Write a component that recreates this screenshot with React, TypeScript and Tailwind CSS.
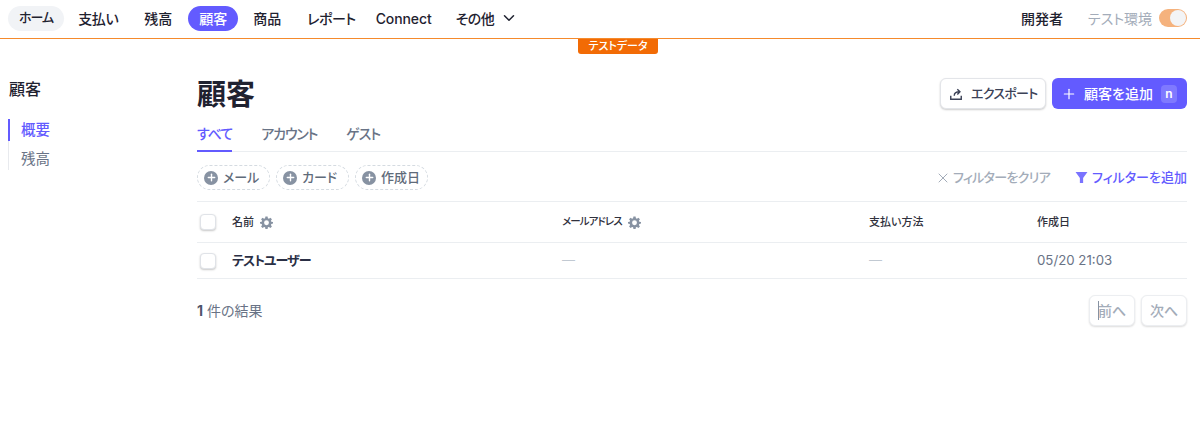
import React from "react";
import { ChevronDown, Plus, X } from "lucide-react";

const font = "font-['Inter','Noto_Sans_CJK_JP',sans-serif] [font-feature-settings:'palt']";

// the kana in the original font are narrow, hence the tracking on those labels
const navItems = [
  { label: "ホーム", cls: "rounded-full bg-[#f1f3f6] px-[11px] text-[13px] tracking-[-1px]" },
  { label: "支払い", cls: "px-[12px] tracking-[-0.4px]" },
  { label: "残高", cls: "px-[12px]" },
  { label: "顧客", cls: "ml-[2px] mr-[1px] w-[50px] justify-center rounded-full bg-[#635bff] text-white" },
  { label: "商品", cls: "px-[12px]" },
  { label: "レポート", cls: "-mr-[6px] px-[12px] tracking-[-0.5px]" },
  { label: "Connect", cls: "px-[12px] tracking-[-0.1px]" },
];

const Gear = () => (
  <svg width="13" height="13" viewBox="0 0 24 24" fill="#8792a2">
    <path
      fillRule="evenodd"
      d="M10 1h4l.6 3.200 1.900.8 2.700-1.900 2.800 2.800-1.900 2.700.8 1.900L24 11v3l-3.100.6-.8 1.900 1.900 2.700-2.800 2.800-2.700-1.900-1.900.8L14 24h-4l-.6-3.100-1.900-.8-2.700 1.900L2 19.200l1.900-2.700-.8-1.900L0 14v-3l3.100-.5.8-1.900L2 5.900l2.800-2.800 2.700 1.900 1.900-.8L10 1zm2 7a4.500 4.500 0 1 0 0 9 4.500 4.500 0 0 0 0-9z"
    />
  </svg>
);

const FilterChip = ({ label }: { label: string }) => (
  <button className="flex h-[25px] w-[73px] items-center gap-[5px] rounded-full border border-dashed border-[#d5dbe1] pl-[6px] text-[13px] font-medium text-[#5f6b7a]">
    <span className="flex h-[14px] w-[14px] shrink-0 items-center justify-center rounded-full bg-[#8792a2]">
      <Plus size={11} strokeWidth={3} className="text-white" />
    </span>
    {label}
  </button>
);

const Checkbox = () => (
  <span className="block h-4 w-4 rounded-[4px] border border-[#e0e3e8] bg-white shadow-[0_1px_2px_rgba(0,0,0,0.22)]" />
);

const App: React.FC = () => {
  return (
    <div className={`${font} h-[432px] w-[1200px] overflow-hidden bg-white text-[#1f2230]`}>
      {/* Top nav */}
      <div className="flex h-[39px] items-center justify-between border-b border-[#f58a2c] pb-[2px] pl-[8px] pr-[13px]">
        <div className="flex items-center gap-[2px] text-[14px] font-medium">
          {navItems.map((item) => (
            <a key={item.label} className={`flex h-[25px] items-center ${item.cls}`}>
              {item.label}
            </a>
          ))}
          <a className="flex h-[25px] items-center gap-[6px] px-[10px] tracking-[-0.5px]">
            その他
            <ChevronDown size={18} strokeWidth={2} />
          </a>
        </div>
        <div className="flex items-center">
          <span className="mr-[25px] text-[14px] font-medium">開発者</span>
          <span className="mr-[7px] text-[14px] text-[#a3acb9]">テスト環境</span>
          <span className="flex h-[18px] w-[28px] items-center justify-end rounded-full bg-[#f5b27d] pr-[1px]">
            <span className="h-[16px] w-[16px] rounded-full bg-[#f3f4f6]" />
          </span>
        </div>
      </div>

      {/* Test data badge */}
      <div className="flex h-[15px] justify-center pl-[36px]">
        <span className="flex h-[15px] w-[80px] items-center justify-center rounded-b-[3px] bg-[#f26b05] text-[11px] font-medium leading-none text-white">
          テストデータ
        </span>
      </div>

      <div className="flex pl-[8px] pr-[13px] pt-[24px]">
        {/* Sidebar */}
        <div className="w-[189px] shrink-0">
          <div className="mb-[18px] pl-px text-[16px] font-medium leading-[22px]">顧客</div>
          <div className="mt-[19px] border-l border-[#e8eaee] text-[14.5px] leading-[22px]">
            <div className="-ml-px border-l-2 border-[#635bff] pl-[11px] font-medium text-[#635bff]">概要</div>
            <div className="pl-[12px] pt-[7px] text-[#697386]">残高</div>
          </div>
        </div>

        {/* Main */}
        <div className="min-w-0 flex-1">
          <div className="flex items-start justify-between">
            <h1 className="-mt-px mb-px text-[29px] font-semibold leading-[36px]">顧客</h1>
            <div className="flex items-center gap-[6px]">
              <button className="flex h-[31px] w-[106px] items-center gap-[8px] rounded-[6px] border border-[#e3e5e9] bg-white pl-[8px] text-[13px] font-medium tracking-[-0.7px] text-[#3c4257] shadow-[0_1px_2px_rgba(0,0,0,0.2)]">
                <svg width="14" height="14" viewBox="0 0 16 16" fill="none" stroke="#3c4257" strokeWidth="1.6">
                  <path d="M2 10v4h12v-4" />
                  <path d="M6 10c0-3 2-4.500 6-4.500M9.500 2.500l3 3-3 3" />
                </svg>
                エクスポート
              </button>
              <button className="flex h-[31px] w-[135px] items-center rounded-[6px] bg-[#635bff] pl-[9px] text-[14px] font-medium text-white">
                <Plus size={16} strokeWidth={1.8} className="mr-[7px]" />
                顧客を追加
                <span className="ml-[8px] flex h-[18px] w-[16px] items-center justify-center rounded-[4px] bg-[#7f79ff] text-[12px] font-semibold">n</span>
              </button>
            </div>
          </div>

          {/* Tabs */}
          <div className="mt-[9px] flex h-[29px] gap-[29px] border-b border-[#ebeef1] text-[14px] font-medium text-[#697386]">
            <span className="-mb-px h-[29px] border-b-2 border-[#635bff] leading-[22px] tracking-[-1px] text-[#635bff]">すべて</span>
            <span className="leading-[22px] tracking-[-1.2px]">アカウント</span>
            <span className="leading-[22px] tracking-[-1px]">ゲスト</span>
          </div>

          {/* Filters */}
          <div className="flex h-[50px] items-center justify-between border-b border-[#ebeef1] pt-[2px]">
            <div className="flex items-center gap-[6px]">
              <FilterChip label="メール" />
              <FilterChip label="カード" />
              <FilterChip label="作成日" />
            </div>
            <div className="flex items-center text-[13px] font-medium">
              <span className="flex items-center gap-[2px] tracking-[-0.7px] text-[#a3acb9]">
                <X size={16} strokeWidth={1.5} />
                フィルターをクリア
              </span>
              <span className="ml-[25px] flex items-center gap-[4px] text-[#635bff]">
                <svg width="13" height="13" viewBox="0 0 12 12" fill="#7a73ff">
                  <path d="M.5 1h11L7.500 6.500V11h-3V6.500z" />
                </svg>
                フィルターを追加
              </span>
            </div>
          </div>

          {/* Table */}
          <div className="grid h-[41px] grid-cols-[35px_330px_307px_168px_1fr] items-center border-b border-[#ebeef1] text-[11px] font-medium text-[#30313d]">
            <div className="pl-[3px]"><Checkbox /></div>
            <div className="flex items-center gap-[6px]">名前 <Gear /></div>
            <div className="flex items-center gap-[6px]"><span className="text-[10.5px] tracking-[-0.9px]">メールアドレス</span> <Gear /></div>
            <div className="pt-[1px]">支払い方法</div>
            <div className="pt-[1px]">作成日</div>
          </div>
          <div className="grid h-[36px] grid-cols-[35px_330px_307px_168px_1fr] items-center border-b border-[#ebeef1] text-[13px]">
            <div className="pl-[3px]"><Checkbox /></div>
            <div className="font-bold tracking-[-1px] text-[#2a2f45]">テストユーザー</div>
            <div className="text-[#c1c9d2]">—</div>
            <div className="text-[#c1c9d2]">—</div>
            <div className="text-[13.25px] text-[#697386]">05/20 21:03</div>
          </div>

          {/* Footer */}
          <div className="mt-[16px] flex items-center justify-between">
            <div className="text-[14px] text-[#697386]">
              <span className="font-bold text-[#4f566b]">1</span> 件の結果
            </div>
            <div className="flex gap-[6px] text-[14px] font-medium text-[#a3acb9]">
              <button className="relative h-[31px] w-[46px] rounded-[6px] border border-[#eceef1] bg-white shadow-[0_1px_2px_rgba(0,0,0,0.14)]">
                <span className="absolute left-[8px] top-[5px] h-[19px] w-px bg-[#8792a2]" />
                前へ
              </button>
              <button className="h-[31px] w-[46px] rounded-[6px] border border-[#eceef1] bg-white shadow-[0_1px_2px_rgba(0,0,0,0.14)]">
                次へ
              </button>
            </div>
          </div>
        </div>
      </div>
    </div>
  );
};

export default App;
